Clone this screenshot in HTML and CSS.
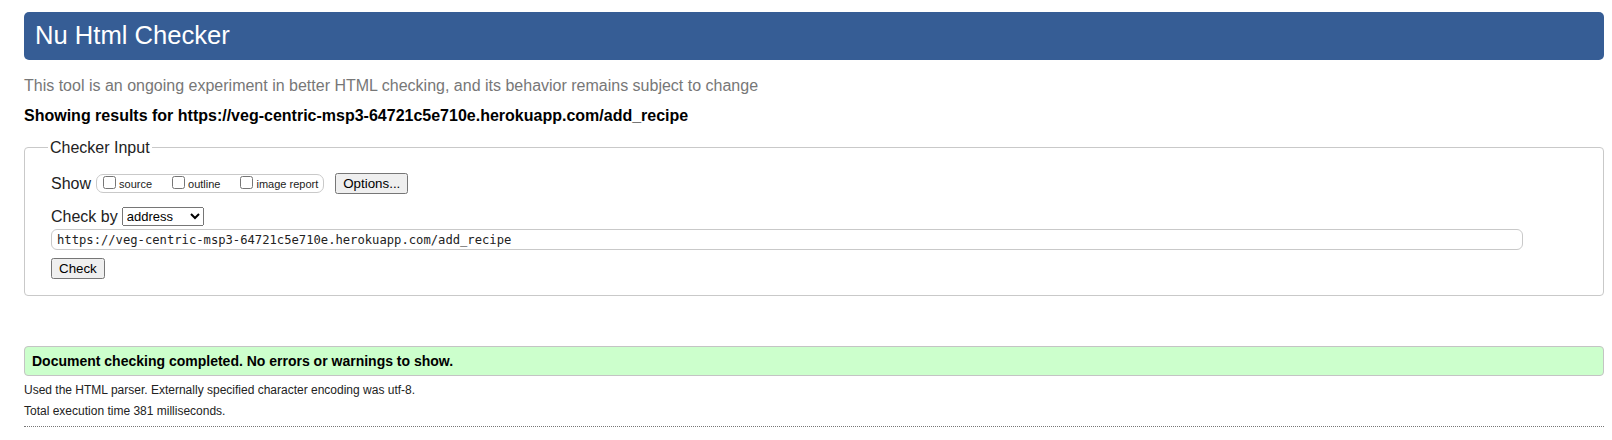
FILE: index.html
```html
<!DOCTYPE html>
<html lang="en">
<head>
<meta charset="utf-8">
<title>Nu Html Checker</title>
<link rel="stylesheet" href="styles.css">
</head>
<body>
<h1 class="title">Nu Html Checker</h1>
<p class="tagline">This tool is an ongoing experiment in better HTML checking, and its behavior remains subject to change</p>
<p class="results-for">Showing results for https://veg-centric-msp3-64721c5e710e.herokuapp.com/add_recipe</p>
<form class="checker">
  <fieldset class="checker-input">
    <legend class="checker-legend">Checker Input</legend>
    <div class="row row-show">
      <span class="row-label">Show</span>
      <span class="toggles">
        <label class="toggle"><input type="checkbox" class="toggle-box"><span>source</span></label>
        <label class="toggle"><input type="checkbox" class="toggle-box"><span>outline</span></label>
        <label class="toggle"><input type="checkbox" class="toggle-box"><span>image report</span></label>
      </span>
      <button type="button" class="btn btn-options">Options...</button>
    </div>
    <div class="row row-by">
      <label class="row-label by-label" for="docselect">Check by</label>
      <select id="docselect" class="doc-select">
        <option>address</option>
        <option>file upload</option>
        <option>text input</option>
      </select>
    </div>
    <div class="row-url">
      <input class="url-input" type="url" value="https://veg-centric-msp3-64721c5e710e.herokuapp.com/add_recipe">
    </div>
    <div class="row-submit">
      <button type="submit" class="btn">Check</button>
    </div>
  </fieldset>
</form>
<p class="success">Document checking completed. No errors or warnings to show.</p>
<p class="details first">Used the HTML parser. Externally specified character encoding was utf-8.</p>
<p class="details">Total execution time 381 milliseconds.</p>
<hr class="end-rule">
</body>
</html>
```

FILE: styles.css
```css
html {
  background: #fff;
}

body {
  margin: 0;
  padding: 12px 8px 0 24px;
  font-family: "Liberation Sans", Arial, sans-serif;
  font-size: 16px;
  line-height: 18px;
  color: #111;
}

.title {
  margin: 0;
  height: 48px;
  box-sizing: border-box;
  padding: 0 0 2px 11px;
  background: #365d95;
  color: #fff;
  border-radius: 5px;
  font-size: 25.6px;
  font-weight: normal;
  line-height: 46px;
}

.tagline {
  margin: 17px 0 0;
  color: #777;
}

.results-for {
  margin: 12px 0 0;
  font-weight: bold;
  color: #000;
}

.checker {
  margin: 13px 0 0;
}

.checker-input {
  margin: 0;
  padding: 16px 26px 16px 26px;
  border: 1px solid #c9c9c9;
  border-radius: 4px;
  min-width: 0;
}

.checker-legend {
  padding: 0 2px;
  margin-left: -3px;
  line-height: 19px;
  color: #222;
}

.row {
  display: flex;
  align-items: center;
}

.row-show {
  height: 21px;
}

.row-label {
  color: #222;
  line-height: 18px;
}

.row-show .row-label {
  margin-right: 5px;
}

.toggles {
  display: inline-flex;
  align-items: flex-end;
  height: 19px;
  box-sizing: border-box;
  border: 1px solid #c9c9c9;
  border-radius: 7px;
  padding: 0 5px 1px 2px;
}

.toggle {
  display: flex;
  align-items: flex-end;
  font-size: 11px;
  line-height: 13px;
  margin-right: 16px;
  color: #222;
}

.toggle:last-child {
  margin-right: 0;
}

.toggle-box {
  margin: 0 3px 2px 4px;
  width: 13px;
  height: 13px;
}

.btn {
  height: 21px;
  box-sizing: border-box;
  padding: 0 6px;
  font-family: "Liberation Sans", Arial, sans-serif;
  font-size: 13.333px;
  color: #000;
}

.btn-options {
  margin-left: 11px;
}

.row-by {
  margin-top: 13px;
  height: 19px;
}

.by-label {
  margin-right: 4px;
}

.doc-select {
  height: 19px;
  box-sizing: border-box;
  font-family: "Liberation Sans", Arial, sans-serif;
  font-size: 13px;
  color: #000;
}

.row-url {
  margin-top: 3px;
}

.url-input {
  display: block;
  width: calc(100% - 54px);
  height: 21px;
  box-sizing: border-box;
  margin: 0;
  padding: 0 5px;
  border: 1px solid #c9c9c9;
  border-radius: 6px;
  font-family: "DejaVu Sans Mono", monospace;
  font-size: 12.18px;
  color: #222;
  background: #fff;
}

.row-submit {
  margin-top: 8px;
  display: flex;
}

.success {
  margin: 50px 0 0;
  padding: 6px 7px;
  border: 1px solid #c4c4c4;
  border-radius: 4px;
  background: #ccffcc;
  font-size: 14px;
  line-height: 16px;
  font-weight: bold;
  color: #000;
}

.details {
  margin: 7px 0 0;
  font-size: 12px;
  line-height: 14px;
  color: #222;
}

.end-rule {
  margin: 8px 0 0;
  height: 0;
  border: 0;
  border-top: 1px dotted #777;
}
```
